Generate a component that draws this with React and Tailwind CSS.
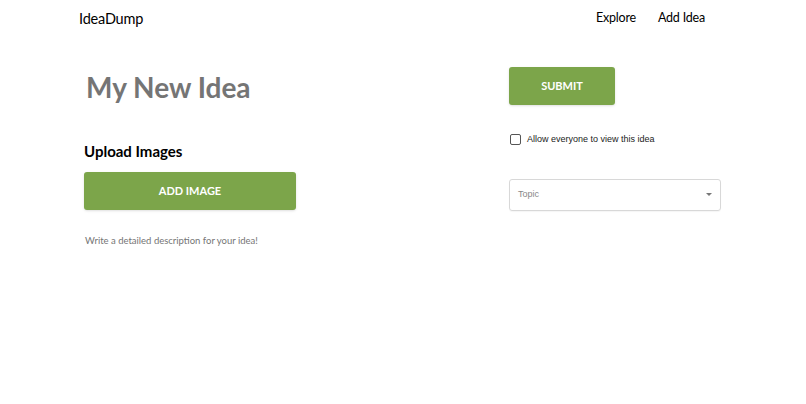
export default function App() {
  return (
    <div className="min-h-[404px] bg-white font-['Lato','Open_Sans',sans-serif] text-black">
      {/* Navbar */}
      <header className="flex items-center justify-between pl-[79px] pr-[101px] h-[37px]">
        <span className="text-[14.5px] tracking-[-0.2px]">IdeaDump</span>
        <nav className="flex gap-[22px] text-[12.5px] tracking-[-0.2px]">
          <a href="#">Explore</a>
          <a href="#">Add Idea</a>
        </nav>
      </header>

      <main className="flex pl-[84px] pt-[30px]">
        {/* Left column */}
        <div className="w-[425px] flex flex-col">
          <h1 className="ml-[2px] text-[28px] leading-[40px] font-bold text-[#757575]">My New Idea</h1>
          <h2 className="mt-[33px] text-[15px] leading-[22px] font-bold">Upload Images</h2>
          <button className="mt-[10px] w-[212px] h-[38px] rounded-[3px] bg-[#7ca54a] text-white text-[11px] font-bold shadow-sm">
            ADD IMAGE
          </button>
          <p className="mt-[24px] ml-[1px] text-[9.5px] text-[#757575]">Write a detailed description for your idea!</p>
        </div>

        {/* Right column */}
        <div className="w-[212px] flex flex-col">
          <button className="w-[106px] h-[38px] rounded-[3px] bg-[#7ca54a] text-white text-[11px] font-bold shadow-sm">
            SUBMIT
          </button>
          <label className="mt-[28px] flex items-center gap-[6px] font-['Liberation_Sans',Arial,sans-serif] text-[9px] text-[#222]">
            <span className="ml-[1px] w-[11px] h-[11px] border border-[#555] rounded-[2px]" />
            Allow everyone to view this idea
          </label>
          <div className="mt-[32px] h-[32px] border border-[#d8d8d8] rounded-[3px] flex items-center justify-between pl-[8px] pr-[8px] font-['Liberation_Sans',Arial,sans-serif] text-[9px] text-[#888] shadow-[0_1px_1px_rgba(0,0,0,0.04)]">
            <span>Topic</span>
            <svg width="6" height="3" viewBox="0 0 6 3"><path d="M0 0h6L3 3z" fill="#777" /></svg>
          </div>
        </div>
      </main>
    </div>
  )
}
